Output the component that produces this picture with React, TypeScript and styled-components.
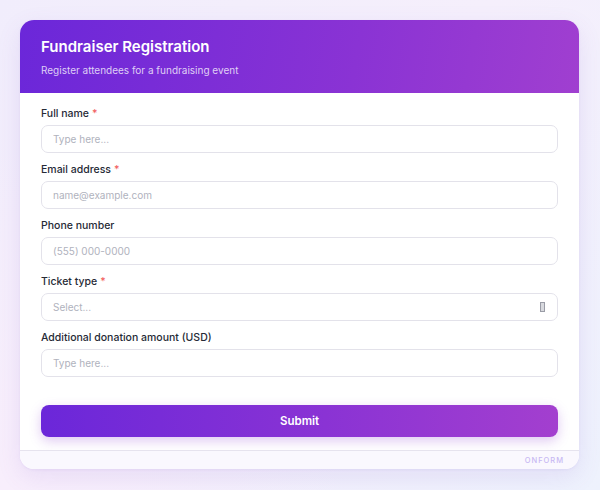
import React from "react";
import styled, { createGlobalStyle } from "styled-components";

const GlobalStyle = createGlobalStyle`
  * { box-sizing: border-box; }
  html, body { margin: 0; padding: 0; }
  body {
    font-family: Inter, "Noto Sans", sans-serif;
    background:
      radial-gradient(circle at 0% 100%, #f8eefc 0%, rgba(248, 238, 252, 0) 45%),
      linear-gradient(135deg, #f1edfc 0%, #f5effc 45%, #eef2fd 100%);
    min-height: 490px;
  }
`;

const Page = styled.div`
  width: 600px;
  height: 490px;
  padding: 20px 21px 21px 20px;
`;

const Card = styled.div`
  background: #ffffff;
  border-radius: 14px;
  overflow: hidden;
  box-shadow: 0 8px 24px rgba(120, 80, 200, 0.12), 0 1px 3px rgba(120, 80, 200, 0.08);
  display: flex;
  flex-direction: column;
`;

const Header = styled.div`
  background: linear-gradient(100deg, #6b27d9 0%, #8a33d4 60%, #a03fd0 100%);
  padding: 17px 21px 17px;
  height: 73px;
  color: #fff;
`;

const Title = styled.h1`
  margin: 0;
  font-size: 15px;
  font-weight: 600;
  line-height: 20px;
`;

const Subtitle = styled.p`
  margin: 6px 0 0;
  font-size: 10px;
  line-height: 14px;
  color: rgba(255, 255, 255, 0.78);
`;

const Body = styled.div`
  padding: 12px 21px 13px;
  display: flex;
  flex-direction: column;
  gap: 8px;
`;

const Field = styled.div`
  display: flex;
  flex-direction: column;
  gap: 2px;
`;

const Label = styled.label`
  font-size: 10.5px;
  font-weight: 500;
  line-height: 18px;
  color: #262a36;
`;

const Required = styled.span`
  color: #f26262;
  margin-left: 3px;
`;

const Input = styled.input`
  height: 28px;
  width: 100%;
  border: 1.5px solid #e3e2ea;
  border-radius: 7px;
  padding: 0 11px;
  font-family: inherit;
  font-size: 10px;
  color: #1f2330;
  outline: none;
  &::placeholder {
    color: #b0b2bd;
  }
`;

const SelectBox = styled.div`
  height: 28px;
  border: 1.5px solid #e3e2ea;
  border-radius: 7px;
  padding: 0 11px;
  display: flex;
  align-items: center;
  justify-content: space-between;
  font-size: 10px;
  color: #b0b2bd;
`;

const Caret = styled.span`
  width: 5px;
  height: 10px;
  border: 1px solid #9a9ca6;
  background: #d8d9de;
  margin-right: 1px;
`;

const Submit = styled.button`
  margin-top: 20px;
  height: 32px;
  border: none;
  border-radius: 8px;
  background: linear-gradient(90deg, #6b27d9 0%, #8a33d4 55%, #a33fcf 100%);
  color: #fff;
  font-family: inherit;
  font-size: 11.5px;
  font-weight: 600;
  box-shadow: 0 4px 12px rgba(140, 60, 210, 0.28);
  cursor: pointer;
`;

const Footer = styled.div`
  border-top: 1px solid #e6e3ee;
  background: #faf8fe;
  height: 19px;
  display: flex;
  align-items: center;
  justify-content: flex-end;
  padding: 0 15px;
  font-size: 7.5px;
  font-weight: 500;
  letter-spacing: 1px;
  color: #c8b9f3;
`;

const fields = [
  { label: "Full name", required: true, placeholder: "Type here..." },
  { label: "Email address", required: true, placeholder: "name@example.com" },
  { label: "Phone number", required: false, placeholder: "(555) 000-0000" },
];

export default function App() {
  return (
    <>
      <GlobalStyle />
      <Page>
        <Card>
          <Header>
            <Title>Fundraiser Registration</Title>
            <Subtitle>Register attendees for a fundraising event</Subtitle>
          </Header>
          <Body>
            {fields.map((f) => (
              <Field key={f.label}>
                <Label>
                  {f.label}
                  {f.required && <Required>*</Required>}
                </Label>
                <Input placeholder={f.placeholder} />
              </Field>
            ))}
            <Field>
              <Label>
                Ticket type<Required>*</Required>
              </Label>
              <SelectBox>
                Select...
                <Caret />
              </SelectBox>
            </Field>
            <Field>
              <Label>Additional donation amount (USD)</Label>
              <Input placeholder="Type here..." />
            </Field>
            <Submit>Submit</Submit>
          </Body>
          <Footer>ONFORM</Footer>
        </Card>
      </Page>
    </>
  );
}
